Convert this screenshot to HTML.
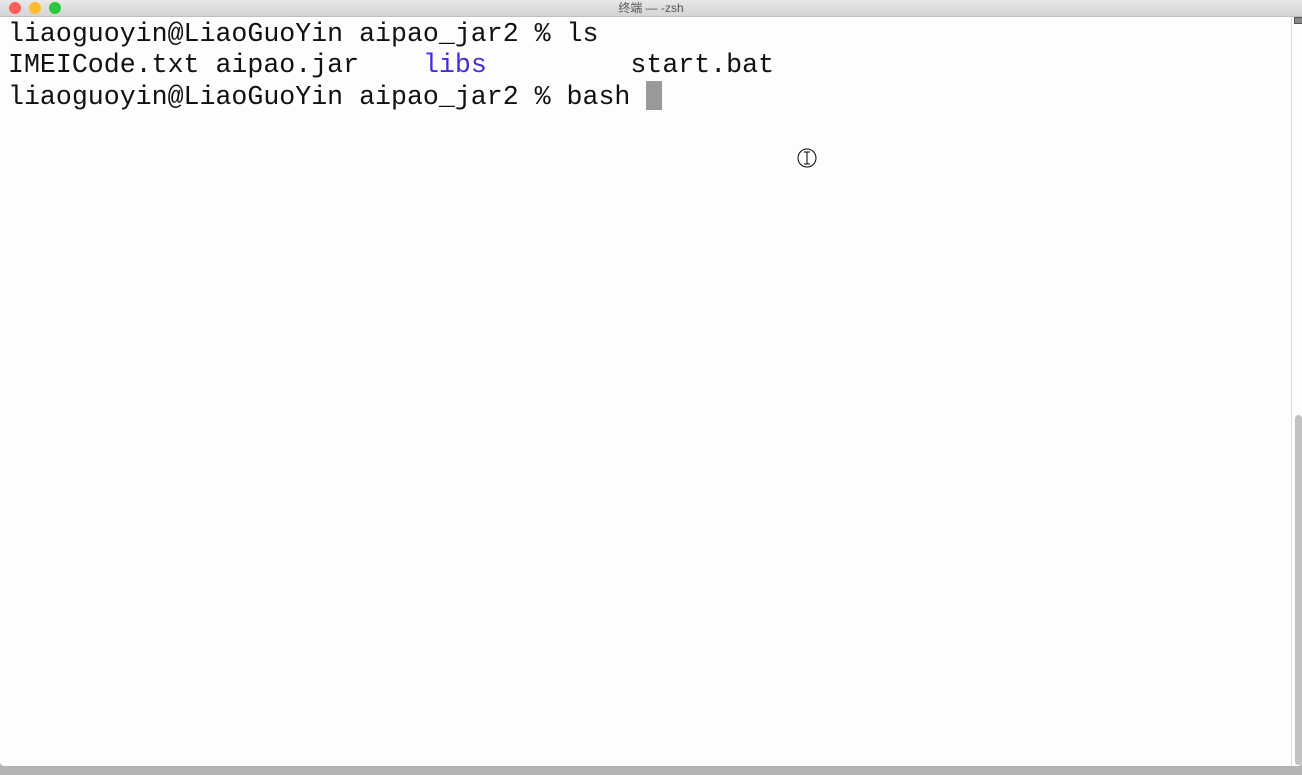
<!DOCTYPE html>
<html><head><meta charset="utf-8"><style>
html,body{margin:0;padding:0;width:1302px;height:775px;overflow:hidden;background:#b4b4b4;}
.win{position:absolute;left:0;top:0;width:1302px;height:766px;background:#fdfdfd;border-radius:0 0 4px 4px;overflow:hidden;}
.title{position:absolute;left:0;top:0;width:1302px;height:16px;background:linear-gradient(#e8e8e8,#d4d4d4);border-bottom:1px solid #c0c0c0;font:12px "Liberation Sans","Noto Sans CJK SC",sans-serif;color:#555;text-align:center;line-height:16px;}
.dot{position:absolute;top:2px;width:12px;height:12px;border-radius:50%;}
.term{position:absolute;left:8px;top:19px;font:26.6px/31px "Liberation Mono",monospace;color:#111;white-space:pre;}
.cur{display:inline-block;width:16px;height:29px;background:#999;vertical-align:-6px;}
.sb{position:absolute;left:1291px;top:17px;width:1px;height:749px;background:#ddd;}
.thumb{position:absolute;left:1295px;top:415px;width:7px;height:350px;background:#c2c2c2;border-radius:4px;}
</style></head><body>
<div class="win">
<div class="title">终端 — -zsh
<div class="dot" style="left:9px;background:#fc5f57"></div>
<div class="dot" style="left:29px;background:#fdbc2e"></div>
<div class="dot" style="left:49px;background:#29c840"></div>
</div>
<div class="term">liaoguoyin@LiaoGuoYin aipao_jar2 % ls
IMEICode.txt aipao.jar    <span style="color:#4b2bd6">libs</span>         start.bat
liaoguoyin@LiaoGuoYin aipao_jar2 % bash <span class="cur"></span></div>
<div class="sb"></div>
<div style="position:absolute;left:1294px;top:17px;width:8px;height:5px;border:1px solid #555;background:#888;"></div>
<div class="thumb"></div>
<svg style="position:absolute;left:797px;top:148px" width="22" height="20"><circle cx="10" cy="10" r="9" fill="#fff" stroke="#000"/><path d="M7 4h6M10 4v12M7 16h6" stroke="#000" fill="none"/></svg>
</div>
</body></html>
